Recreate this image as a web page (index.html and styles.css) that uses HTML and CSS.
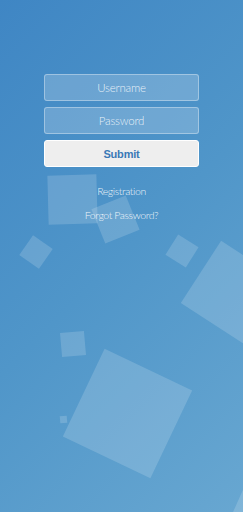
FILE: index.html
```html
<!DOCTYPE html>
<html lang="en">
<head>
    <meta charset="UTF-8">
    <meta name="viewport" content="width=device-width, initial-scale=1.0">
    <title>Login</title>
    <link rel="stylesheet" href="styles.css">
</head>
<body>
    <div class="wrapper">
        <div class="login-box">
            <form class="login-form">
                <input type="text" class="field" placeholder="Username">
                <input type="password" class="field" placeholder="Password">
                <button type="button" class="submit-btn">Submit</button>
            </form>
            <div class="login-links">
                <a href="#" class="link">Registration</a>
                <a href="#" class="link">Forgot Password?</a>
            </div>
        </div>

        <ul class="bg-bubbles">
            <li class="b1"></li>
            <li class="b2"></li>
            <li class="b3"></li>
            <li class="b4"></li>
            <li class="b5"></li>
            <li class="b6"></li>
            <li class="b7"></li>
            <li class="b8"></li>
            <li class="b9"></li>
        </ul>
    </div>
</body>
</html>
```

FILE: styles.css
```css
* {
    box-sizing: border-box;
}

html, body {
    margin: 0;
    padding: 0;
    height: 100%;
}

body {
    font-family: Lato, "Open Sans", sans-serif;
    overflow: hidden;
}

.wrapper {
    position: relative;
    width: 100%;
    height: 100%;
    background: linear-gradient(135deg, #3f86c4 0%, #5096c9 50%, #68a7d1 100%);
    overflow: hidden;
}

.login-box {
    position: relative;
    z-index: 2;
    width: 155px;
    margin: 0 auto;
    padding-top: 74px;
}

.login-form {
    display: flex;
    flex-direction: column;
    gap: 6px;
}

.field {
    width: 100%;
    height: 27px;
    margin: 0;
    border: 1px solid rgba(255, 255, 255, 0.35);
    border-radius: 3px;
    background: rgba(255, 255, 255, 0.2);
    color: #fff;
    font-family: Lato, sans-serif;
    font-weight: 300;
    font-size: 11.5px;
    letter-spacing: -0.2px;
    text-align: center;
    outline: none;
}

.field::placeholder {
    color: rgba(255, 255, 255, 0.85);
}

.submit-btn {
    width: 100%;
    height: 27px;
    margin: 0;
    border: 1px solid #fff;
    border-radius: 3px;
    background: #eeeeee;
    color: #3a79b6;
    font-family: "Liberation Sans", Arial, sans-serif;
    font-weight: bold;
    font-size: 11px;
    letter-spacing: -0.2px;
    cursor: pointer;
}

.login-links {
    display: flex;
    flex-direction: column;
    align-items: center;
    gap: 10px;
    margin-top: 17px;
}

.link {
    color: rgba(255, 255, 255, 0.9);
    text-decoration: none;
    font-weight: 300;
    font-size: 10.5px;
    letter-spacing: -0.4px;
    line-height: 14px;
}

.bg-bubbles {
    position: absolute;
    top: 0;
    left: 0;
    width: 100%;
    height: 100%;
    margin: 0;
    padding: 0;
    list-style: none;
    z-index: 1;
}

.bg-bubbles li {
    position: absolute;
    background: rgba(255, 255, 255, 0.16);
}

.b1 { width: 49px; height: 49px; left: 48px; top: 175px; transform: rotate(-1.5deg); }
.b2 { width: 37px; height: 37px; left: 97px; top: 201px; transform: rotate(-22deg); }
.b3 { width: 24px; height: 24px; left: 24px; top: 240px; transform: rotate(35deg); }
.b4 { width: 24px; height: 24px; left: 170px; top: 239px; transform: rotate(32deg); }
.b5 { width: 74px; height: 74px; left: 195px; top: 255px; transform: rotate(33deg); background: rgba(255, 255, 255, 0.2); }
.b6 { width: 24px; height: 24px; left: 61px; top: 332px; transform: rotate(-5deg); }
.b7 { width: 97px; height: 97px; left: 79px; top: 365px; transform: rotate(25.5deg); }
.b8 { width: 7px; height: 7px; left: 60px; top: 416px; transform: rotate(-5deg); }
.b9 { width: 60px; height: 60px; left: 235px; top: 484px; transform: rotate(24deg); }
```
